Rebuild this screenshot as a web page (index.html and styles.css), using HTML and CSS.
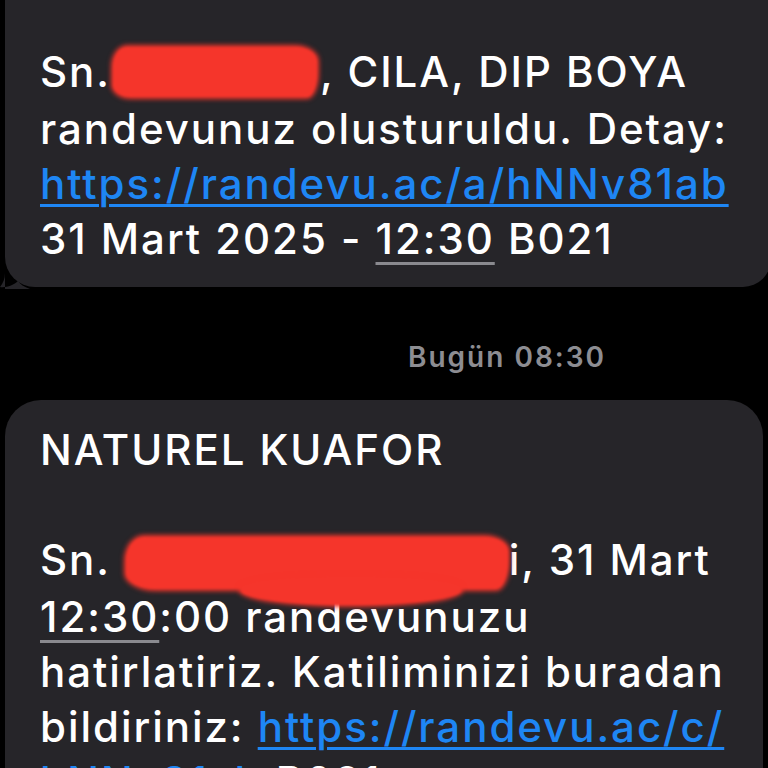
FILE: index.html
```html
<!DOCTYPE html>
<html lang="tr">
<head>
<meta charset="utf-8">
<title>Mesajlar</title>
<link rel="stylesheet" href="styles.css">
</head>
<body>
<main class="thread">
  <div class="bubble bubble-first">
    <p class="msg">Sn.<span class="redact redact-a"></span>, CILA, DIP BOYA<br>randevunuz olusturuldu. Detay:<br><a class="link" href="#">https://randevu.ac/a/hNNv81ab</a><br>31 Mart 2025 - <span class="date">12:30</span> B021</p>
    <svg class="tail" width="30" height="26" viewBox="0 0 30 26" aria-hidden="true"><path d="M5 0 L5 10 C5 16 3 20 0 24 C6 25 14 22 18 18 C20 21 24 24 30 26 L5 26 Z" fill="#262529"/></svg>
  </div>
  <div class="stamp"><span class="stamp-text">Bugün 08:30</span></div>
  <div class="bubble bubble-second">
    <p class="msg">NATUREL KUAFOR<br><br>Sn. <span class="redact redact-b"></span>i, 31 Mart<br><span class="date">12:30</span>:00 randevunuzu<br>hatirlatiriz. Katiliminizi buradan<br>bildiriniz: <a class="link" href="#">https://randevu.ac/c/</a><br><a class="link" href="#">hNNv81ab</a> B021</p>
  </div>
</main>
</body>
</html>
```

FILE: styles.css
```css
* { box-sizing: border-box; }
html, body {
  margin: 0;
  padding: 0;
  background: #000;
  height: 768px;
  overflow: hidden;
}
body {
  font-family: Inter, "Noto Sans", "Liberation Sans", sans-serif;
  color: #fff;
}
.thread {
  display: flex;
  flex-direction: column;
}
.bubble {
  background: #262529;
  position: relative;
  margin-left: 5px;
}
.bubble-first {
  width: 766px;
  padding: 44px 0 21px 35px;
  border-radius: 0 0 28px 30px;
}
.bubble-second {
  width: 758px;
  padding: 22px 0 0 35px;
  border-radius: 36px 36px 0 0;
  min-height: 400px;
}
.msg {
  margin: 0;
  font-size: 42px;
  line-height: 55px;
  font-weight: 500;
  letter-spacing: 1.95px;
  white-space: nowrap;
}
.link {
  color: #1e86f4;
  text-decoration: underline;
  text-decoration-thickness: 3px;
  text-underline-offset: 5px;
}
.date {
  text-decoration: underline;
  text-decoration-color: #8a8a8f;
  text-decoration-thickness: 3px;
  text-underline-offset: 8px;
}
.redact {
  display: inline-block;
  background: #f5352b;
  vertical-align: middle;
  box-shadow: 0 0 4px 2px #f5352b;
  filter: blur(1px);
}
.redact-a {
  width: 204px;
  height: 50px;
  margin: 0 3px 0 2px;
  border-radius: 14px 22px 10px 18px / 20px 14px 24px 12px;
  transform: translateY(-4px);
}
.redact-b {
  width: 382px;
  height: 52px;
  margin: 0 1px 0 2px;
  border-radius: 18px 24px 12px 30px / 24px 14px 28px 16px;
  position: relative;
}
.redact-b::after {
  content: "";
  position: absolute;
  left: 115px;
  top: 40px;
  width: 220px;
  height: 28px;
  background: #f5352b;
  border-radius: 40% 40% 50% 50%;
  box-shadow: 0 0 4px 2px #f5352b;
}
.tail {
  position: absolute;
  left: -5px;
  bottom: -2px;
}
.stamp {
  margin-top: 54px;
  margin-bottom: 27px;
  padding-left: 408px;
  height: 32px;
}
.stamp-text {
  font-size: 28px;
  line-height: 32px;
  font-weight: 600;
  letter-spacing: 2px;
  color: #8d8d92;
}
```
